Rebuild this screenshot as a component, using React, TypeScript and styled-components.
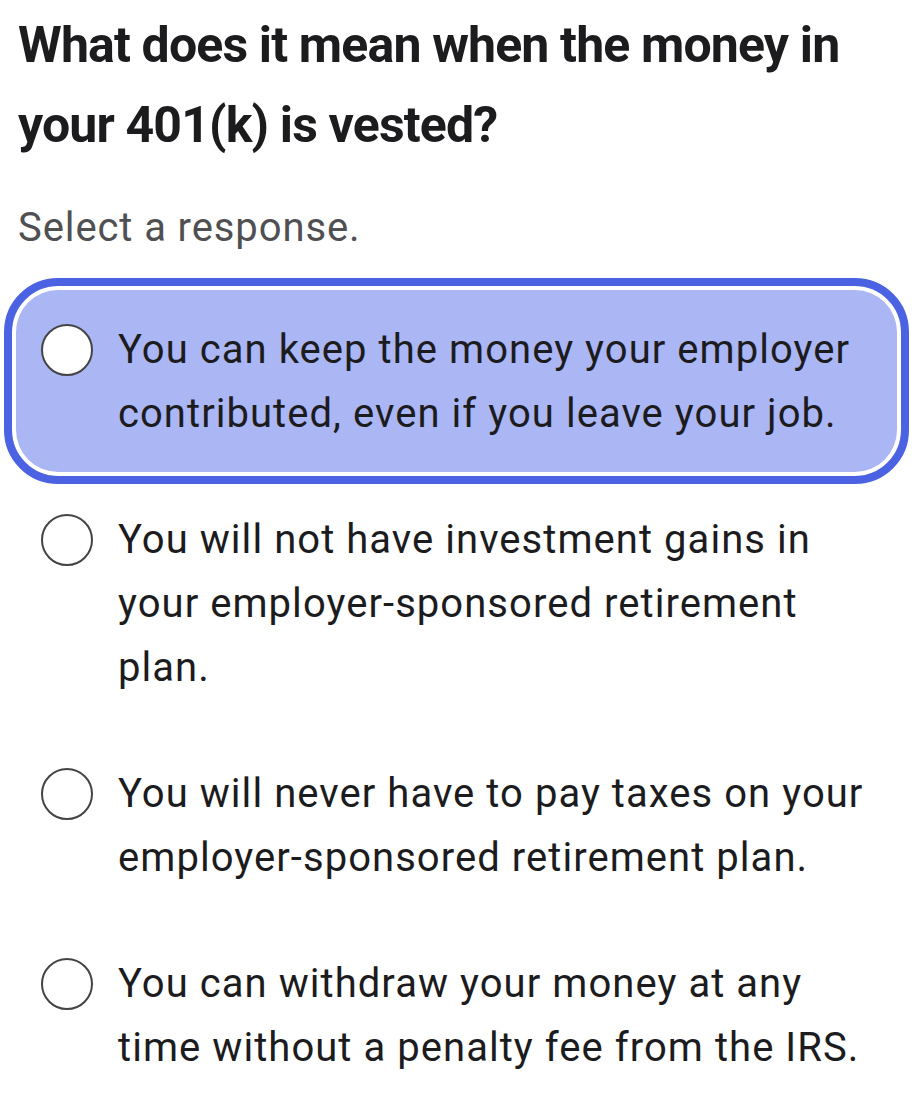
import React, { useState } from 'react';
import styled, { createGlobalStyle } from 'styled-components';

const GlobalStyle = createGlobalStyle`
  html, body {
    margin: 0;
    padding: 0;
    background: #ffffff;
  }
  body {
    font-family: Roboto, "Liberation Sans", sans-serif;
    color: #1c1c1e;
  }
`;

const Page = styled.div`
  width: 913px;
  box-sizing: border-box;
  padding: 5px 4px 0;
`;

const Question = styled.h1`
  margin: 0;
  padding: 0 60px 0 14px;
  font-family: Roboto, "Liberation Sans", sans-serif;
  font-size: 50px;
  font-weight: 700;
  letter-spacing: -0.85px;
  line-height: 80px;
  color: #1c1c1e;
`;

const Hint = styled.p`
  margin: 31px 0 27px;
  padding-left: 14px;
  font-size: 40px;
  letter-spacing: 0.9px;
  line-height: 64px;
  color: #505052;
`;

const Options = styled.div`
  display: flex;
  flex-direction: column;
`;

// the selected card reaches a little past its row, so rows keep an even pitch
const Option = styled.label<{ selected: boolean }>`
  display: flex;
  align-items: flex-start;
  gap: 25px;
  margin: ${({ selected }) => (selected ? '-9px 0 -7px' : '0')};
  padding: ${({ selected }) => (selected ? '32px 29px 30px' : '23px 29px')};
  border: 8px solid ${({ selected }) => (selected ? '#4b63e3' : 'transparent')};
  border-radius: 54px;
  background: ${({ selected }) => (selected ? '#abb6f5' : 'transparent')};
  box-shadow: ${({ selected }) => (selected ? 'inset 0 0 0 4px #ffffff' : 'none')};
  cursor: pointer;
`;

const Radio = styled.span`
  flex: none;
  width: 52px;
  height: 52px;
  margin-top: 6px;
  box-sizing: border-box;
  border: 2.5px solid #444446;
  border-radius: 50%;
  background: #ffffff;
`;

const OptionText = styled.span`
  font-size: 40px;
  letter-spacing: 1.05px;
  line-height: 64px;
  color: #1c1c1e;
`;

const answers = [
  'You can keep the money your employer contributed, even if you leave your job.',
  'You will not have investment gains in your employer-sponsored retirement plan.',
  'You will never have to pay taxes on your employer-sponsored retirement plan.',
  'You can withdraw your money at any time without a penalty fee from the IRS.',
];

const App: React.FC = () => {
  const [selected, setSelected] = useState(0);

  return (
    <Page>
      <GlobalStyle />
      <Question>What does it mean when the money in your 401(k) is vested?</Question>
      <Hint>Select a response.</Hint>
      <Options>
        {answers.map((answer, index) => (
          <Option
            key={answer}
            selected={selected === index}
            onClick={() => setSelected(index)}
          >
            <Radio />
            <OptionText>{answer}</OptionText>
          </Option>
        ))}
      </Options>
    </Page>
  );
};

export default App;
